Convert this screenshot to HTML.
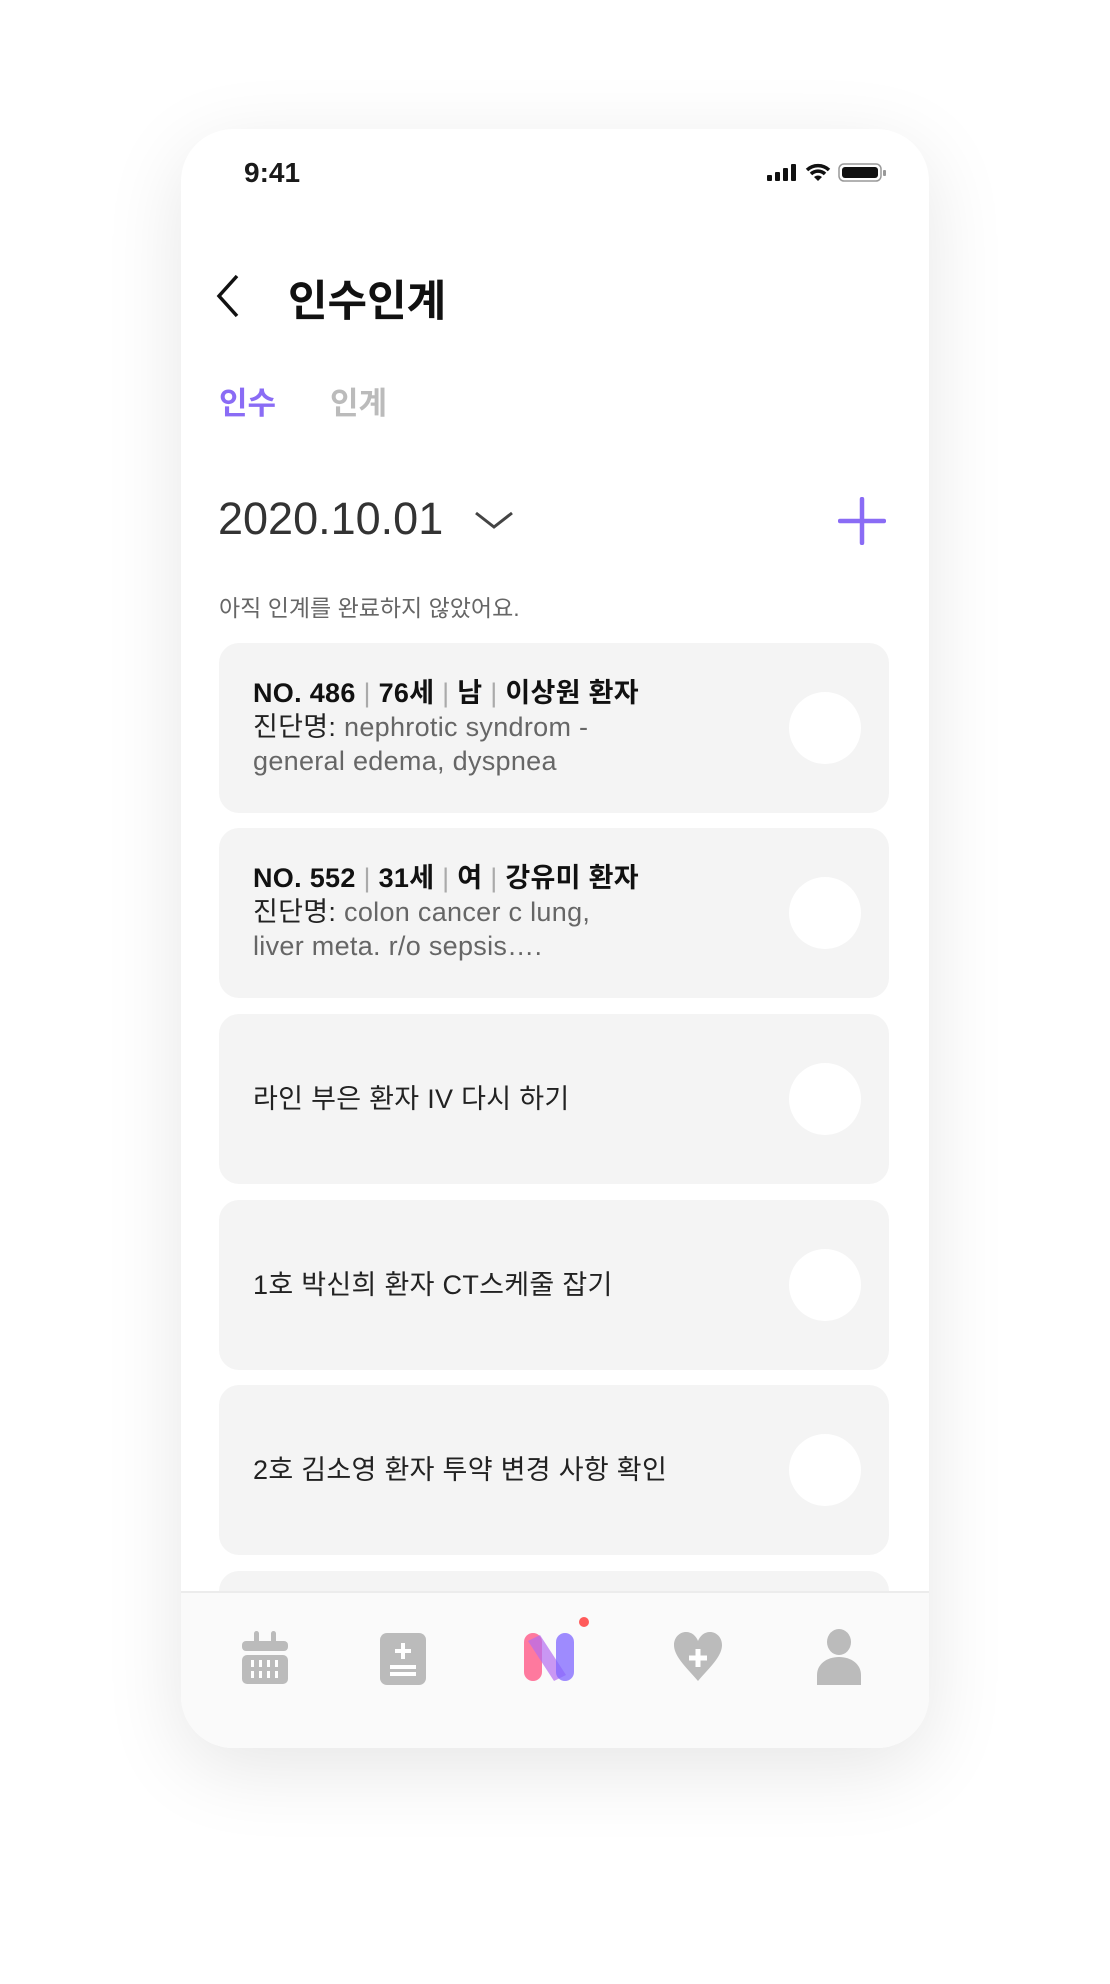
<!DOCTYPE html>
<html><head><meta charset="utf-8"><style>
*{margin:0;padding:0;box-sizing:border-box}
body{width:1110px;height:1984px;background:#fff;position:relative;overflow:hidden;font-family:"Liberation Sans","Noto Sans CJK KR",sans-serif;color:#1a1a1a}
.phone{position:absolute;left:181px;top:129px;width:748px;height:1619px;background:#fff;border-radius:52px;box-shadow:0 20px 80px rgba(0,0,0,0.10);overflow:hidden}
.abs{position:absolute}
.card{position:absolute;left:38px;width:670px;height:170px;background:#f4f4f4;border-radius:20px}
.card .c{position:absolute;left:570px;top:49px;width:72px;height:72px;border-radius:50%;background:#fff}
.card .t{position:absolute;left:34px;font-size:27px;line-height:34px;letter-spacing:0.3px}
.b{font-weight:bold;color:#111}
.g{color:#666}
.sep{color:#aaa;font-weight:normal}
.nav{position:absolute;left:0;top:1462px;width:748px;height:157px;background:#fafafa;border-top:2px solid #ececec}
</style></head><body>
<div class="phone">
  <div class="abs" style="left:63px;top:28px;font-size:28px;font-weight:bold">9:41</div>
  <svg class="abs" style="left:586px;top:32px" width="134" height="24" viewBox="0 0 134 24">
    <rect x="0" y="14" width="5" height="6" rx="1" fill="#111"/><rect x="8" y="11" width="5" height="9" rx="1" fill="#111"/><rect x="16" y="7" width="5" height="13" rx="1" fill="#111"/><rect x="24" y="3" width="5" height="17" rx="1" fill="#111"/>
    <path d="M40 9 A16 16 0 0 1 62 9 M44 13 A10 10 0 0 1 58 13" stroke="#111" stroke-width="3.5" fill="none"/><path d="M47 16 L51 20 L55 16 A6 6 0 0 0 47 16Z" fill="#111"/>
    <rect x="72" y="3" width="42" height="17" rx="5" fill="none" stroke="#999" stroke-width="1.5"/><rect x="75" y="6" width="36" height="11" rx="3" fill="#111"/><rect x="116" y="9" width="3" height="6" rx="1" fill="#999"/>
  </svg>
  <svg class="abs" style="left:34px;top:145px" width="26" height="44" viewBox="0 0 26 44"><path d="M22 2 L4 22 L22 42" stroke="#111" stroke-width="3.5" fill="none"/></svg>
  <div class="abs" style="left:107px;top:138px;font-size:43px;font-weight:bold;color:#111">인수인계</div>
  <div class="abs" style="left:38px;top:249px;font-size:31px;font-weight:bold;color:#8a6cf5">인수</div>
  <div class="abs" style="left:149px;top:249px;font-size:31px;font-weight:bold;color:#bbb">인계</div>
  <div class="abs" style="left:37px;top:364px;font-size:45px;color:#333">2020.10.01</div>
  <svg class="abs" style="left:293px;top:381px" width="40" height="20" viewBox="0 0 40 20"><path d="M2 3 L20 17 L38 3" stroke="#444" stroke-width="3" fill="none"/></svg>
  <svg class="abs" style="left:657px;top:368px" width="48" height="48" viewBox="0 0 48 48"><path d="M24 2 V46 M2 24 H46" stroke="#8a6cf5" stroke-width="4.5" stroke-linecap="round"/></svg>
  <div class="abs" style="left:38px;top:460px;font-size:23px;color:#666">아직 인계를 완료하지 않았어요.</div>

  <div class="card" style="top:514px"><div class="t" style="top:33px"><span class="b">NO. 486 <span class="sep">|</span> 76세 <span class="sep">|</span> 남 <span class="sep">|</span> 이상원 환자</span><br><span style="color:#222">진단명:</span> <span class="g">nephrotic syndrom -<br>general edema, dyspnea</span></div><div class="c"></div></div>
  <div class="card" style="top:699px"><div class="t" style="top:33px"><span class="b">NO. 552 <span class="sep">|</span> 31세 <span class="sep">|</span> 여 <span class="sep">|</span> 강유미 환자</span><br><span style="color:#222">진단명:</span> <span class="g">colon cancer c lung,<br>liver meta. r/o sepsis….</span></div><div class="c"></div></div>
  <div class="card" style="top:885px"><div class="t" style="top:68px;color:#222">라인 부은 환자 IV 다시 하기</div><div class="c"></div></div>
  <div class="card" style="top:1071px"><div class="t" style="top:68px;color:#222">1호 박신희 환자 CT스케줄 잡기</div><div class="c"></div></div>
  <div class="card" style="top:1256px"><div class="t" style="top:68px;color:#222">2호 김소영 환자 투약 변경 사항 확인</div><div class="c"></div></div>
  <div class="card" style="top:1442px"></div>

  <div class="nav">
    <svg class="abs" style="left:61px;top:36px" width="46" height="56" viewBox="0 0 46 56"><rect x="0" y="12" width="46" height="10" rx="4" fill="#bbb"/><rect x="12" y="2" width="5" height="16" rx="2.5" fill="#bbb"/><rect x="29" y="2" width="5" height="16" rx="2.5" fill="#bbb"/><rect x="0" y="26" width="46" height="29" rx="5" fill="#bbb"/><g fill="#fff"><rect x="9" y="31" width="3" height="7"/><rect x="17" y="31" width="3" height="7"/><rect x="25" y="31" width="3" height="7"/><rect x="33" y="31" width="3" height="7"/><rect x="9" y="42" width="3" height="7"/><rect x="17" y="42" width="3" height="7"/><rect x="25" y="42" width="3" height="7"/><rect x="33" y="42" width="3" height="7"/></g></svg>
    <svg class="abs" style="left:199px;top:40px" width="46" height="52" viewBox="0 0 46 52"><rect width="46" height="52" rx="7" fill="#bbb"/><path d="M23 10 V26 M15 18 H31 M10 34 H36 M10 41 H36" stroke="#fff" stroke-width="4"/></svg>
    <svg class="abs" style="left:343px;top:24px" width="70" height="68" viewBox="0 0 70 68"><rect x="0" y="16" width="18" height="48" rx="9" fill="#ff4d7f" opacity="0.75"/><path d="M4 24 L16 18 L42 58 L30 64Z" fill="#b46cf0" opacity="0.7"/><rect x="32" y="16" width="18" height="48" rx="9" fill="#7f66ff" opacity="0.75"/><circle cx="60" cy="5" r="5" fill="#ff5a5a"/></svg>
    <svg class="abs" style="left:491px;top:38px" width="52" height="52" viewBox="0 0 52 52"><path d="M26 50 C16 38 2 26 2 14 C2 6 8 1 14 1 C20 1 24 5 26 10 C28 5 32 1 38 1 C44 1 50 6 50 14 C50 26 36 38 26 50Z" fill="#bbb"/><path d="M26 18 V36 M17 27 H35" stroke="#fff" stroke-width="5"/></svg>
    <svg class="abs" style="left:636px;top:36px" width="44" height="56" viewBox="0 0 44 56"><ellipse cx="22" cy="13" rx="12" ry="13" fill="#bbb"/><path d="M0 56 L0 46 C0 35 10 28 22 28 C34 28 44 35 44 46 L44 56Z" fill="#bbb"/></svg>
  </div>
</div>
</body></html>
